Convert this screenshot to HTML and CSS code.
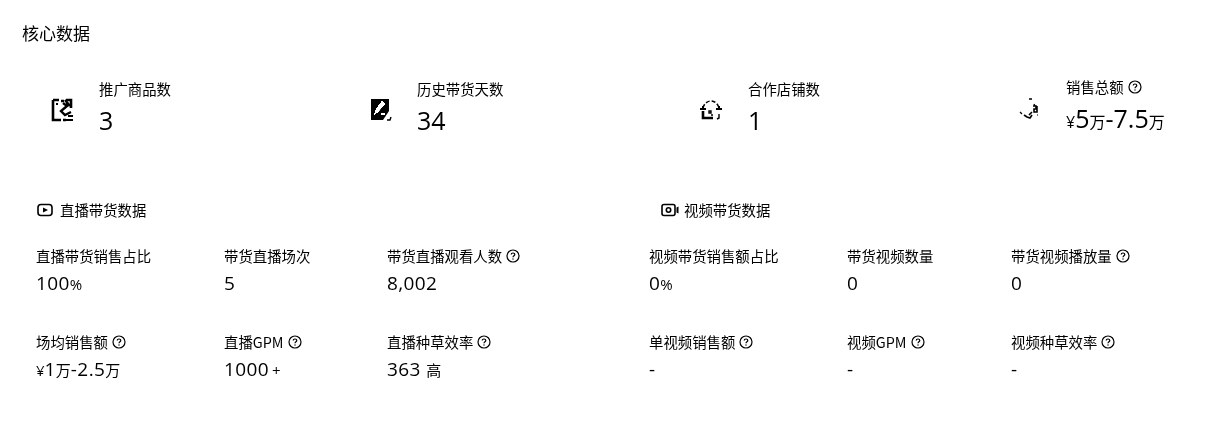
FILE: index.html
```html
<!DOCTYPE html>
<html lang="zh-CN">
<head>
    <meta charset="UTF-8">
    <title>核心数据</title>
    <link rel="stylesheet" href="styles.css">
</head>
<body>
    <svg class="defs" width="0" height="0">
        <symbol id="help" viewBox="0 0 14 14">
            <circle cx="7" cy="7" r="6" fill="none" stroke="#111" stroke-width="1.2"/>
            <path d="M5.2 5.6c0-1 .8-1.6 1.8-1.6s1.8.6 1.8 1.5c0 1.3-1.8 1.3-1.8 2.8" fill="none" stroke="#111" stroke-width="1.2"/>
            <rect x="6.4" y="9.4" width="1.2" height="1.2" fill="#111"/>
        </symbol>
    </svg>

    <h1 class="title">核心数据</h1>

    <section class="summary">
        <div class="summary-item item-goods">
            <svg class="summary-icon" viewBox="0 0 24 24"><path d="M3 2h6M11 3h3M16 2h5v8M3 2v20h8M13 22h3" fill="none" stroke="#000" stroke-width="2.6"/><path d="M13 5l4 3-6 5 4 4 6-3M15 2l5 6" fill="none" stroke="#000" stroke-width="2.4"/><path d="M18 18h5M16 22h7" stroke="#000" stroke-width="1.8"/><path d="M6 5h2v2H6zM16 5h3v2h-3z" fill="#000"/></svg>
            <div>
                <div class="summary-label">推广商品数</div>
                <div class="summary-value">3</div>
            </div>
        </div>
        <div class="summary-item item-days">
            <svg class="summary-icon" viewBox="0 0 24 24"><path d="M3 1h18v12l-6 9H3z" fill="#000"/><path d="M6 17l4-3 7-8-3-3-6 8zM5 4h3M5 7h2M5 10h1M18 10h1" stroke="#fff" stroke-width=".6" fill="#fff"/><path d="M13 15h4v2h-4z" fill="#fff"/><path d="M19 22h3l1-3" fill="none" stroke="#000" stroke-width="1.4"/></svg>
            <div>
                <div class="summary-label">历史带货天数</div>
                <div class="summary-value">34</div>
            </div>
        </div>
        <div class="summary-item item-shops">
            <svg class="summary-icon" viewBox="0 0 24 24"><path d="M4 10C5 6 8 3 12 3s7 3 8 7" fill="none" stroke="#000" stroke-width="1.5" stroke-dasharray="4 2"/><path d="M1 11h6M17 11h6M3 9h2M19 9h2" stroke="#000" stroke-width="2"/><path d="M4 13v7h10" fill="none" stroke="#000" stroke-width="2.6"/><path d="M20 16v4l-2 1M10 13h2v2h-2zM12 17h2" fill="none" stroke="#000" stroke-width="1.4"/></svg>
            <div>
                <div class="summary-label">合作店铺数</div>
                <div class="summary-value">1</div>
            </div>
        </div>
        <div class="summary-item item-sales">
            <svg class="summary-icon" viewBox="0 0 24 24"><path d="M12 1h3M17 6l1 2" stroke="#000" stroke-width="1.4" fill="none"/><path d="M16 8h3v3h-2v3h3v-6M15 14l-3 3M7 17l3 2 3 1 2-3" fill="none" stroke="#000" stroke-width="1.6"/><path d="M3 14l2 2M20 17h1" stroke="#000" stroke-width="1.2"/></svg>
            <div>
                <div class="summary-label">销售总额 <svg class="help"><use href="#help"/></svg></div>
                <div class="summary-value"><small>¥</small>5<small>万</small>-7.5<small>万</small></div>
            </div>
        </div>
    </section>

    <section class="groups">
        <div class="group group-live">
            <h2 class="group-title">
                <svg class="group-icon" viewBox="0 0 16 14"><rect x="1" y="1.5" width="14" height="11" rx="3" fill="none" stroke="#000" stroke-width="1.6"/><path d="M6 4.5l5 2.5-5 2.5z" fill="#000"/></svg>
                直播带货数据
            </h2>
            <div class="metrics">
                <div class="metric">
                    <div class="metric-label">直播带货销售占比</div>
                    <div class="metric-value">100<small>%</small></div>
                </div>
                <div class="metric">
                    <div class="metric-label">带货直播场次</div>
                    <div class="metric-value">5</div>
                </div>
                <div class="metric">
                    <div class="metric-label">带货直播观看人数 <svg class="help"><use href="#help"/></svg></div>
                    <div class="metric-value">8,002</div>
                </div>
                <div class="metric">
                    <div class="metric-label">场均销售额 <svg class="help"><use href="#help"/></svg></div>
                    <div class="metric-value"><small>¥</small>1<small>万</small>-2.5<small>万</small></div>
                </div>
                <div class="metric">
                    <div class="metric-label">直播GPM <svg class="help"><use href="#help"/></svg></div>
                    <div class="metric-value">1000<small class="plus">+</small></div>
                </div>
                <div class="metric">
                    <div class="metric-label">直播种草效率 <svg class="help"><use href="#help"/></svg></div>
                    <div class="metric-value">363 <small>高</small></div>
                </div>
            </div>
        </div>
        <div class="group group-video">
            <h2 class="group-title">
                <svg class="group-icon icon-video" viewBox="0 0 18 14"><rect x="1" y="1.5" width="13" height="11" rx="2" fill="none" stroke="#000" stroke-width="1.6"/><circle cx="7.5" cy="7" r="2.2" fill="none" stroke="#000" stroke-width="1.6"/><path d="M15.5 4.5l2-1v7l-2-1z" fill="#000"/></svg>
                视频带货数据
            </h2>
            <div class="metrics">
                <div class="metric">
                    <div class="metric-label">视频带货销售额占比</div>
                    <div class="metric-value">0<small>%</small></div>
                </div>
                <div class="metric">
                    <div class="metric-label">带货视频数量</div>
                    <div class="metric-value">0</div>
                </div>
                <div class="metric">
                    <div class="metric-label">带货视频播放量 <svg class="help"><use href="#help"/></svg></div>
                    <div class="metric-value">0</div>
                </div>
                <div class="metric">
                    <div class="metric-label">单视频销售额 <svg class="help"><use href="#help"/></svg></div>
                    <div class="metric-value">-</div>
                </div>
                <div class="metric">
                    <div class="metric-label">视频GPM <svg class="help"><use href="#help"/></svg></div>
                    <div class="metric-value">-</div>
                </div>
                <div class="metric">
                    <div class="metric-label">视频种草效率 <svg class="help"><use href="#help"/></svg></div>
                    <div class="metric-value">-</div>
                </div>
            </div>
        </div>
    </section>
</body>
</html>
```

FILE: styles.css
```css
* {
    margin: 0;
    padding: 0;
    box-sizing: border-box;
}
body {
    font-family: "Noto Sans CJK SC", "Noto Sans", sans-serif;
    color: #111111;
    background-color: #FFFFFF;
    width: 1208px;
    height: 428px;
    overflow: hidden;
    filter: brightness(0.85) contrast(6);
}
.defs {
    display: block;
    height: 0;
}
.title {
    font-size: 17px;
    font-weight: 400;
    line-height: 24px;
    padding: 21px 0 0 22px;
}
.summary {
    display: flex;
    padding: 33px 0 0 50px;
}
.summary-item {
    display: flex;
    align-items: center;
}
.item-goods {
    width: 318px;
}
.item-days {
    width: 331px;
}
.item-shops {
    width: 318px;
}
.summary-icon {
    width: 24px;
    height: 24px;
    margin-top: 4px;
    margin-right: 25px;
    flex: none;
}
.summary-label {
    font-size: 14.4px;
    line-height: 18px;
    display: flex;
    align-items: center;
    gap: 4px;
}
.summary-value {
    font-family: "Open Sans", "Noto Sans CJK SC", sans-serif;
    font-size: 25px;
    line-height: 30px;
    margin-top: 7px;
}
.summary-value small {
    font-size: 16px;
}
.groups {
    display: flex;
    padding: 64px 0 0 36px;
}
.group-live {
    width: 613px;
}
.group-title {
    display: flex;
    align-items: center;
    gap: 7px;
    font-size: 14.4px;
    font-weight: 400;
    line-height: 18px;
    padding-left: 1px;
}
.group-video .group-title {
    padding-left: 12px;
    gap: 5px;
}
.group-icon {
    height: 14px;
    width: 16px;
}
.icon-video {
    width: 18px;
}
.metrics {
    display: grid;
    grid-template-columns: 188px 163px 1fr;
    row-gap: 37px;
    margin-top: 28px;
}
.group-video .metrics {
    grid-template-columns: 198px 164px 1fr;
}
.metric-label {
    font-size: 14.4px;
    line-height: 18px;
    display: flex;
    align-items: center;
    gap: 4px;
}
.metric-value {
    font-family: "Open Sans", "Noto Sans CJK SC", sans-serif;
    font-size: 19px;
    letter-spacing: 0.4px;
    line-height: 24px;
    margin-top: 6px;
}
.metric-value small {
    font-size: 15px;
    letter-spacing: 0;
}
.metric-value .plus {
    margin-left: 3px;
}
.help {
    width: 14px;
    height: 14px;
}
```
